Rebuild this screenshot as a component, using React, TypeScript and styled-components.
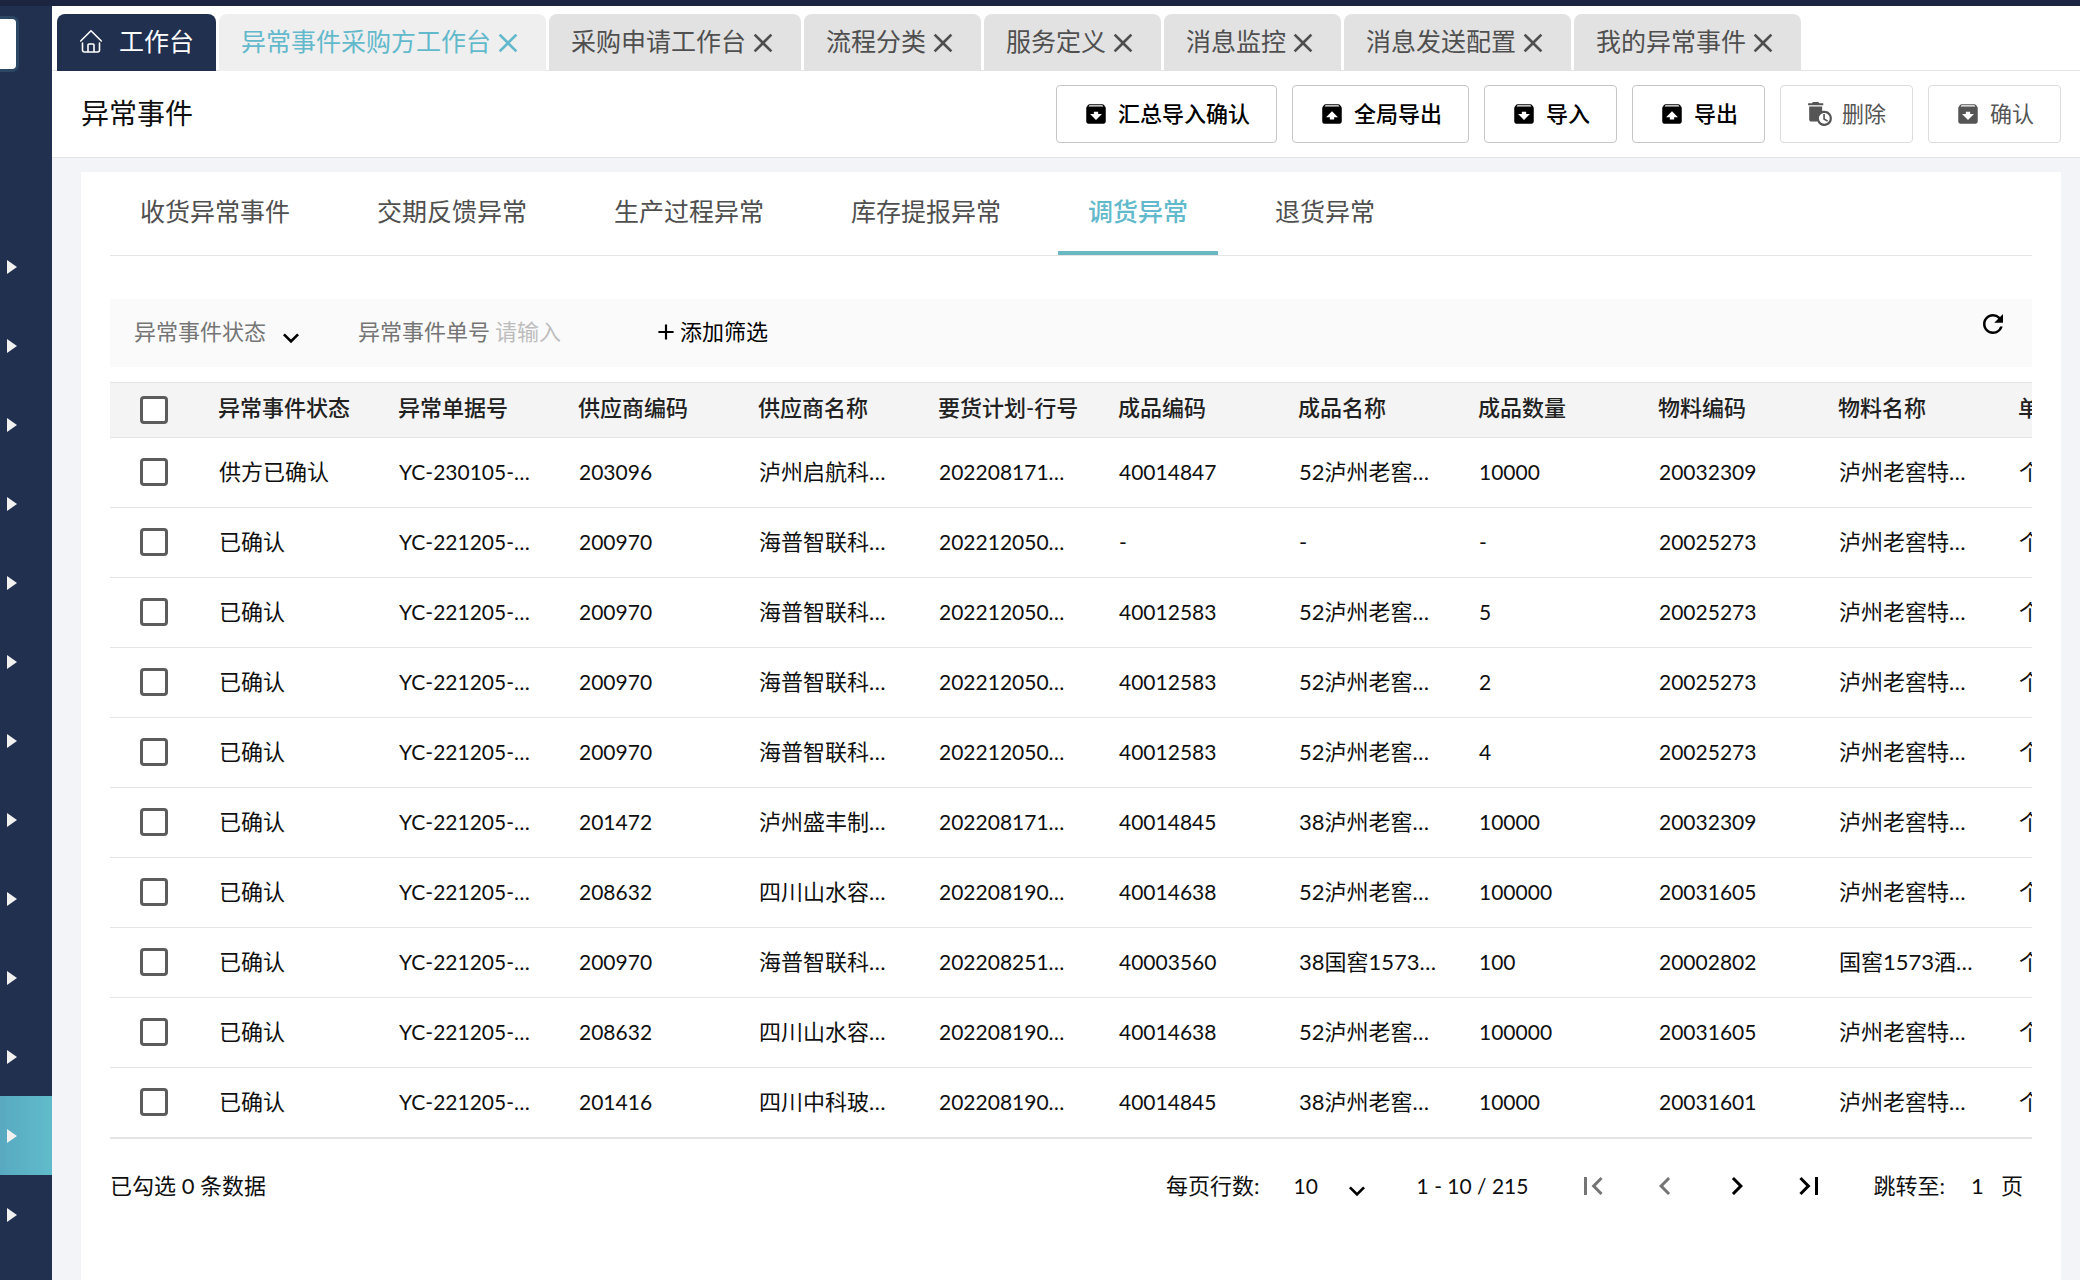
import React from 'react';
import styled, { createGlobalStyle, css } from 'styled-components';
import {
  MdAdd,
  MdArchive,
  MdAutoDelete,
  MdChevronLeft,
  MdChevronRight,
  MdClose,
  MdExpandMore,
  MdFirstPage,
  MdLastPage,
  MdRefresh,
  MdUnarchive,
} from 'react-icons/md';

const color = {
  top: '#1b2540',
  navy: '#223050',
  teal: '#62b9cb',
  tealBar: '#6ab8c2',
  page: '#f3f4f7',
  line: '#e4e4e4',
  text: '#0f0f0f',
  grey: '#4f4f4f',
};

const GlobalStyle = createGlobalStyle`
  * { box-sizing: border-box; }
  body {
    margin: 0;
    overflow: hidden;
    background: ${color.page};
    color: ${color.text};
    font-family: Lato, "Noto Sans CJK SC", sans-serif;
    font-size: 22px;
    line-height: 32px;
  }
  button, input, select {
    font: inherit;
    color: inherit;
    border: 0;
    padding: 0;
    margin: 0;
    background: none;
  }
  svg { display: block; flex: none; }
`;

const Shell = styled.div`
  display: flex;
  flex-direction: column;
  height: 100vh;
  overflow: hidden;
`;

const TopBar = styled.div`
  flex: none;
  height: 6px;
  background: ${color.top};
`;

const Body = styled.div`
  display: flex;
  flex: 1;
  min-height: 0;
`;

/* ---------- sidebar ---------- */

const Sidebar = styled.nav`
  flex: none;
  width: 52px;
  overflow: hidden;
  background: ${color.navy};
`;

const SideSearch = styled.input`
  display: block;
  width: 16px;
  height: 50px;
  margin: 13px 0 158px;
  border-radius: 0 4px 4px 0;
  background: #fff;
  box-shadow: 0 0 0 3px #2b4764;
`;

const SideList = styled.ul`
  margin: 0;
  padding: 0;
  list-style: none;
`;

const SideItem = styled.button<{ $active?: boolean }>`
  display: flex;
  align-items: center;
  width: 100%;
  height: 79px;
  padding-left: 7px;
  ${(p) => p.$active && css`background: linear-gradient(90deg, #58a9c0, #60bccb);`}
`;

/* ---------- window tabs ---------- */

const Main = styled.div`
  display: flex;
  flex: 1;
  flex-direction: column;
  min-width: 0;
`;

const WindowTabs = styled.div`
  display: flex;
  flex: none;
  gap: 3px;
  height: 65px;
  padding: 8px 0 0 5px;
  background: linear-gradient(${color.line}, ${color.line}) bottom / 100% 1px no-repeat #fff;
`;

const HomeTab = styled.button`
  display: flex;
  align-items: center;
  gap: 16px;
  padding: 0 22px 3px;
  border-radius: 8px 8px 0 0;
  background: ${color.navy};
  color: #fff;
  font-size: 25px;
  line-height: 36px;
`;

const WindowTab = styled.div<{ $active?: boolean }>`
  display: flex;
  align-items: center;
  gap: 1px;
  padding: 0 22px;
  border-radius: 8px 8px 0 0;
  background: ${(p) => (p.$active ? '#efefef' : '#e2e2e2')};
  color: ${(p) => (p.$active ? color.teal : color.grey)};
`;

const WindowTabLabel = styled.button`
  padding-bottom: 3px;
  font-size: 25px;
  line-height: 36px;
  white-space: nowrap;
`;

/* ---------- title bar ---------- */

const TitleBar = styled.header`
  display: flex;
  flex: none;
  align-items: center;
  justify-content: space-between;
  height: 87px;
  padding: 0 19px 0 29px;
  border-bottom: 1px solid ${color.line};
  background: #fff;
`;

const Title = styled.h1`
  margin: 0;
  padding-bottom: 2px;
  font-size: 28px;
  font-weight: 400;
  line-height: 40px;
`;

const Actions = styled.div`
  display: flex;
  gap: 15px;
`;

const ActionButton = styled.button`
  display: flex;
  align-items: center;
  gap: 9px;
  height: 58px;
  padding: 0 26px;
  border: 1px solid #c6c6c6;
  border-radius: 4px;
  color: #000;
  font-weight: 500;
  white-space: nowrap;

  &:disabled {
    border-color: #dcdcdc;
    color: #555;
    font-weight: 400;
  }
`;

/* ---------- card ---------- */

const Card = styled.main`
  display: flex;
  flex: 1;
  flex-direction: column;
  margin: 14px 19px 0 29px;
  padding: 0 29px;
  background: #fff;
`;

const Tabs = styled.div`
  display: flex;
  gap: 27px;
  height: 84px;
  border-bottom: 1px solid ${color.line};
`;

const Tab = styled.button<{ $active?: boolean }>`
  padding: 0 30px 2px;
  border-bottom: 4px solid transparent;
  color: ${color.grey};
  font-size: 25px;
  line-height: 36px;
  ${(p) =>
    p.$active &&
    css`
      border-color: ${color.tealBar};
      color: ${color.teal};
      font-weight: 500;
    `}
`;

const Filters = styled.div`
  display: flex;
  align-items: flex-start;
  height: 68px;
  margin-top: 43px;
  padding: 17px 24px;
  background: #fafafa;
  color: #757575;
`;

const FilterButton = styled.button`
  display: flex;
  gap: 9px;
  svg { margin-top: 6px; }
`;

const FilterField = styled.label`
  display: flex;
  gap: 5px;
  margin-left: 51px;
  white-space: nowrap;
`;

const FilterInput = styled.input`
  width: 140px;
  height: 32px;
  outline: 0;
  &::placeholder { color: #bdbdbd; opacity: 1; }
`;

const AddFilter = styled.button`
  display: flex;
  align-items: center;
  gap: 1px;
  margin-left: 18px;
  color: #000;
`;

const Refresh = styled.button`
  margin-left: auto;
  height: 16px;
  display: flex;
  align-items: center;
  color: #000;
`;

const Chevron = styled(MdExpandMore)`
  color: #000;
`;

/* ---------- table ---------- */

const TableScroll = styled.div`
  flex: none;
  margin-top: 15px;
  overflow: hidden;
  border-bottom: 1px solid ${color.line};
`;

const Table = styled.table`
  width: 2068px;
  border-collapse: separate;
  border-spacing: 0;
  table-layout: fixed;
`;

const HeadCell = styled.th`
  height: 56px;
  padding: 0 0 5px 20px;
  border-top: 1px solid ${color.line};
  border-bottom: 1px solid ${color.line};
  background: #f4f4f4;
  color: #222;
  font-weight: 500;
  text-align: left;
  white-space: nowrap;
`;

const Cell = styled.td<{ $numeric?: boolean }>`
  height: 70px;
  padding: 0 0 1px 21px;
  border-bottom: 1px solid ${color.line};
  font-size: ${(p) => (p.$numeric ? 21 : 22)}px;
  white-space: nowrap;
`;

const CheckHead = styled(HeadCell)`
  width: 88px;
  padding: 0 0 0 30px;
`;

const CheckCell = styled(Cell)`
  padding: 0 0 2px 30px;
`;

const Check = styled.input`
  display: block;
  width: 28px;
  height: 28px;
  appearance: none;
  border: 3px solid #5c5c5c;
  border-radius: 4px;
  background: #fff;
  &:checked { background: ${color.teal}; }
`;

/* ---------- footer ---------- */

const Footer = styled.footer`
  display: flex;
  align-items: center;
  justify-content: space-between;
  margin-top: 26px;
  white-space: nowrap;
`;

const Pager = styled.div`
  display: flex;
  align-items: center;
  padding-right: 9px;
`;

const PageSize = styled.label`
  display: flex;
  align-items: center;
  gap: 34px;
`;

const SelectWrap = styled.span`
  display: grid;
  align-items: center;
  width: 79px;
  font-size: 21px;
  > * { grid-area: 1 / 1; }
  svg { justify-self: end; margin-top: 10px; pointer-events: none; }
`;

const Select = styled.select`
  width: 100%;
  height: 32px;
  appearance: none;
`;

const Range = styled.span`
  margin-left: 44px;
  font-size: 21px;
`;

const PageButtons = styled.div`
  display: flex;
  gap: 36px;
  margin-left: 47px;
`;

const PageButton = styled.button`
  color: #000;
  &:disabled { color: #757575; }
`;

const Jump = styled.label`
  display: flex;
  margin-left: 46px;
`;

const JumpInput = styled.input`
  width: 30px;
  height: 32px;
  margin-left: 26px;
`;

/* ---------- data ---------- */

const windowTabs = ['异常事件采购方工作台', '采购申请工作台', '流程分类', '服务定义', '消息监控', '消息发送配置', '我的异常事件'];

const eventTabs = ['收货异常事件', '交期反馈异常', '生产过程异常', '库存提报异常', '调货异常', '退货异常'];

const actions = [
  { label: '汇总导入确认', Icon: MdArchive },
  { label: '全局导出', Icon: MdUnarchive },
  { label: '导入', Icon: MdArchive },
  { label: '导出', Icon: MdUnarchive },
  { label: '删除', Icon: MdAutoDelete, disabled: true },
  { label: '确认', Icon: MdArchive, disabled: true },
];

const columns = ['异常事件状态', '异常单据号', '供应商编码', '供应商名称', '要货计划-行号', '成品编码', '成品名称', '成品数量', '物料编码', '物料名称', '单位'];

const rows = [
  ['供方已确认', 'YC-230105-…', '203096', '泸州启航科…', '202208171…', '40014847', '52泸州老窖…', '10000', '20032309', '泸州老窖特…', '个'],
  ['已确认', 'YC-221205-…', '200970', '海普智联科…', '202212050…', '-', '-', '-', '20025273', '泸州老窖特…', '个'],
  ['已确认', 'YC-221205-…', '200970', '海普智联科…', '202212050…', '40012583', '52泸州老窖…', '5', '20025273', '泸州老窖特…', '个'],
  ['已确认', 'YC-221205-…', '200970', '海普智联科…', '202212050…', '40012583', '52泸州老窖…', '2', '20025273', '泸州老窖特…', '个'],
  ['已确认', 'YC-221205-…', '200970', '海普智联科…', '202212050…', '40012583', '52泸州老窖…', '4', '20025273', '泸州老窖特…', '个'],
  ['已确认', 'YC-221205-…', '201472', '泸州盛丰制…', '202208171…', '40014845', '38泸州老窖…', '10000', '20032309', '泸州老窖特…', '个'],
  ['已确认', 'YC-221205-…', '208632', '四川山水容…', '202208190…', '40014638', '52泸州老窖…', '100000', '20031605', '泸州老窖特…', '个'],
  ['已确认', 'YC-221205-…', '200970', '海普智联科…', '202208251…', '40003560', '38国窖1573…', '100', '20002802', '国窖1573酒…', '个'],
  ['已确认', 'YC-221205-…', '208632', '四川山水容…', '202208190…', '40014638', '52泸州老窖…', '100000', '20031605', '泸州老窖特…', '个'],
  ['已确认', 'YC-221205-…', '201416', '四川中科玻…', '202208190…', '40014845', '38泸州老窖…', '10000', '20031601', '泸州老窖特…', '个'],
];

const numericColumns = new Set([1, 2, 4, 5, 7, 8]);

const sideItems = Array.from({ length: 13 }, (_, i) => i);

const HomeIcon = () => (
  <svg width="24" height="24" viewBox="0 0 24 24" fill="none" stroke="currentColor" strokeWidth="1.6" strokeLinejoin="round" strokeLinecap="round">
    <path d="M1.700 12 12 1.800 22.300 12" />
    <path d="M3.500 14v7q0 2 2 2h13q2 0 2-2v-7" />
    <path d="M9 22.500V16q0-1 1-1h4q1 0 1 1v6.500" />
  </svg>
);

const SideArrow = () => (
  <svg width="10" height="14" viewBox="0 0 10 14" fill="#f1f1ef">
    <path d="M0 0 10 7 0 14z" />
  </svg>
);

export default function App() {
  return (
    <Shell>
      <GlobalStyle />
      <TopBar />
      <Body>
        <Sidebar aria-label="菜单">
          <SideSearch type="search" aria-label="搜索" />
          <SideList>
            {sideItems.map((i) => (
              <li key={i}>
                <SideItem $active={i === 11} aria-label={`菜单 ${i + 1}`}>
                  <SideArrow />
                </SideItem>
              </li>
            ))}
          </SideList>
        </Sidebar>
        <Main>
          <WindowTabs>
            <HomeTab>
              <HomeIcon />
              工作台
            </HomeTab>
            {windowTabs.map((label, i) => (
              <WindowTab key={label} $active={i === 0}>
                <WindowTabLabel>{label}</WindowTabLabel>
                <button aria-label={`关闭 ${label}`}>
                  <MdClose size={32} />
                </button>
              </WindowTab>
            ))}
          </WindowTabs>
          <TitleBar>
            <Title>异常事件</Title>
            <Actions>
              {actions.map(({ label, Icon, disabled }) => (
                <ActionButton key={label} disabled={disabled}>
                  <Icon size={26} />
                  {label}
                </ActionButton>
              ))}
            </Actions>
          </TitleBar>
          <Card>
            <Tabs role="tablist">
              {eventTabs.map((label) => (
                <Tab key={label} role="tab" aria-selected={label === '调货异常'} $active={label === '调货异常'}>
                  {label}
                </Tab>
              ))}
            </Tabs>
            <Filters>
              <FilterButton>
                异常事件状态
                <Chevron size={32} />
              </FilterButton>
              <FilterField>
                异常事件单号
                <FilterInput placeholder="请输入" />
              </FilterField>
              <AddFilter>
                <MdAdd size={26} />
                添加筛选
              </AddFilter>
              <Refresh aria-label="刷新">
                <MdRefresh size={30} />
              </Refresh>
            </Filters>
            <TableScroll>
              <Table>
                <thead>
                  <tr>
                    <CheckHead>
                      <Check type="checkbox" aria-label="全选" />
                    </CheckHead>
                    {columns.map((name) => (
                      <HeadCell key={name}>{name}</HeadCell>
                    ))}
                  </tr>
                </thead>
                <tbody>
                  {rows.map((row, r) => (
                    <tr key={r}>
                      <CheckCell>
                        <Check type="checkbox" aria-label={`选择第 ${r + 1} 行`} />
                      </CheckCell>
                      {row.map((value, c) => (
                        <Cell key={c} $numeric={numericColumns.has(c)}>
                          {value}
                        </Cell>
                      ))}
                    </tr>
                  ))}
                </tbody>
              </Table>
            </TableScroll>
            <Footer>
              <span>已勾选 0 条数据</span>
              <Pager>
                <PageSize>
                  每页行数:
                  <SelectWrap>
                    <Select defaultValue="10">
                      <option>10</option>
                      <option>20</option>
                    </Select>
                    <Chevron size={32} />
                  </SelectWrap>
                </PageSize>
                <Range>1 - 10 / 215</Range>
                <PageButtons>
                  <PageButton disabled aria-label="第一页">
                    <MdFirstPage size={36} />
                  </PageButton>
                  <PageButton disabled aria-label="上一页">
                    <MdChevronLeft size={36} />
                  </PageButton>
                  <PageButton aria-label="下一页">
                    <MdChevronRight size={36} />
                  </PageButton>
                  <PageButton aria-label="最后一页">
                    <MdLastPage size={36} />
                  </PageButton>
                </PageButtons>
                <Jump>
                  跳转至:
                  <JumpInput defaultValue="1" />
                  页
                </Jump>
              </Pager>
            </Footer>
          </Card>
        </Main>
      </Body>
    </Shell>
  );
}
